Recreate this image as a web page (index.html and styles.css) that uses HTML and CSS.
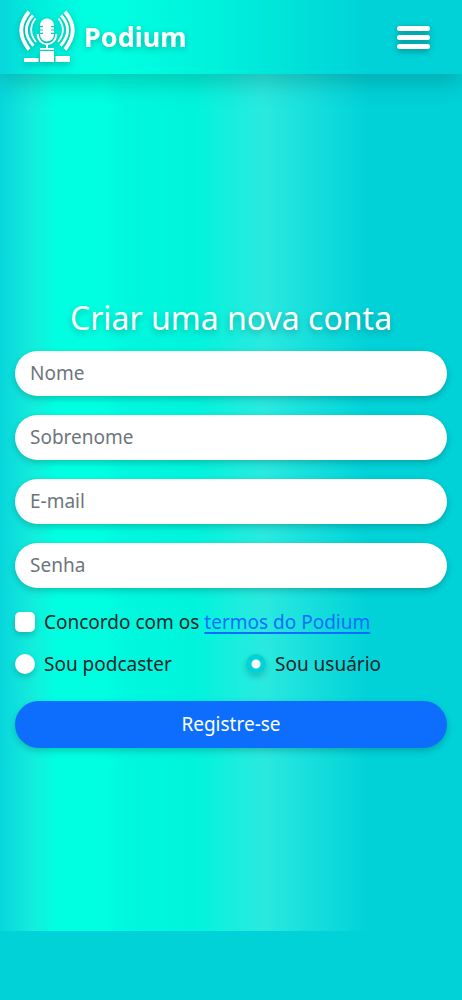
FILE: index.html
```html
<!DOCTYPE html>
<html lang="pt-BR">
<head>
<meta charset="utf-8">
<meta name="viewport" content="width=device-width, initial-scale=1">
<title>Podium</title>
<link rel="stylesheet" href="styles.css">
</head>
<body>
<div class="page">
  <header class="navbar">
    <a class="brand" href="#">
      <svg class="brand-logo" viewBox="0 0 56 54" aria-hidden="true">
        <g fill="none" stroke="#fff">
          <path stroke-width="3.8" d="M10 1.800Q-5.500 20 10 39.500M46 1.800Q61.500 20 46 39.500"/>
          <path stroke-width="2.800" d="M14 5.200Q0.500 20 14.500 35.800M42 5.200Q55.500 20 41.500 35.800"/>
          <path stroke-width="1.800" d="M16.500 8.500Q7.500 20 17 32M39.500 8.500Q48.500 20 39 32"/>
          <path stroke-width="2" d="M18.700 24C19 37.500 37 37.500 37.300 24M28 34v4"/>
        </g>
        <path fill="#fff" d="M21 15.500a7 7 0 0 1 14 0V16h-3v1.200h3v2.200h-3v1.200h3v2.200h-3V24h3v.5a7 7 0 0 1-14 0V24h3v-1.200h-3v-2.200h3v-1.200h-3v-2.200h3V16h-3zM21 38h14v1.800H21zM21 41h14v11H21zM5 48h14.500v4H5zM36.500 46H51v6H36.500z"/>
      </svg>
      <span>Podium</span>
    </a>
    <button class="menu" type="button" aria-label="Abrir menu">
      <span></span><span></span><span></span>
    </button>
  </header>
  <main class="content">
    <h1>Criar uma nova conta</h1>
    <form class="signup">
      <input class="field" type="text" placeholder="Nome" aria-label="Nome">
      <input class="field" type="text" placeholder="Sobrenome" aria-label="Sobrenome">
      <input class="field" type="email" placeholder="E-mail" aria-label="E-mail">
      <input class="field" type="password" placeholder="Senha" aria-label="Senha">
      <div class="option terms">
        <input class="check" type="checkbox" id="terms">
        <label for="terms">Concordo com os <a href="#">termos do Podium</a></label>
      </div>
      <div class="roles">
        <div class="option">
          <input class="check radio" type="radio" name="role" id="podcaster">
          <label for="podcaster">Sou podcaster</label>
        </div>
        <div class="option">
          <input class="check radio" type="radio" name="role" id="user" checked>
          <label for="user">Sou usuário</label>
        </div>
      </div>
      <button class="submit" type="submit">Registre-se</button>
    </form>
  </main>
</div>
</body>
</html>
```
FILE: styles.css
```css
* { box-sizing: border-box; }

html { background: #00d2d8; }

body {
  margin: 0;
  font-family: "Noto Sans", sans-serif;
  font-size: 19px;
  line-height: 30px;
  color: #212529;
}

.page {
  display: flex;
  flex-direction: column;
  min-height: calc(100vh - 69px);
  background: linear-gradient(90deg, #08d6dc 0%, #14ecdc 7%, #00ffe1 12%, #00ffe1 22%, #00f8df 27%, #00f4dc 42%, #2ae9df 57%, #00d2d8 80%);
}

.navbar {
  display: flex;
  align-items: center;
  justify-content: space-between;
  height: 74px;
  padding: 0 32px 0 19px;
  background: linear-gradient(90deg, #08d6dc 0%, #00ecdc 7%, #00ffe1 19%, #00ffe1 25%, #00f0dc 48%, #00d2d8 80%);
  box-shadow: 0 8px 24px rgba(0, 0, 0, .2);
}

.brand {
  display: flex;
  align-items: center;
  gap: 9px;
  color: #fff;
  font-size: 27px;
  font-weight: 700;
  text-decoration: none;
  filter: drop-shadow(0 2px 3px rgba(0, 0, 0, .25));
}

.brand-logo { width: 56px; height: 54px; }

.menu {
  display: flex;
  flex-direction: column;
  gap: 4px;
  width: 33px;
  padding: 0;
  border: 0;
  background: none;
  filter: drop-shadow(0 2px 3px rgba(0, 0, 0, .35));
}

.menu span { height: 5px; border-radius: 3px; background: #fff; }

.content {
  display: flex;
  flex: 1;
  flex-direction: column;
  justify-content: center;
  padding: 37px 15px 0;
}

h1 {
  margin: 0 0 10px;
  font-size: 32px;
  font-weight: 400;
  line-height: 46px;
  text-align: center;
  color: #fff;
  text-shadow: 0 3px 6px rgba(0, 0, 0, .25);
}

.signup { display: flex; flex-direction: column; gap: 19px; }

.field {
  width: 100%;
  height: 45px;
  padding: 0 15px;
  border: 0;
  border-radius: 23px;
  background: #fff;
  font: inherit;
  color: #212529;
  box-shadow: 0 3px 7px rgba(0, 0, 0, .2);
}

.field::placeholder { color: #6c757d; opacity: 1; }

.option { display: flex; align-items: center; gap: 9px; }

.terms { margin-bottom: -7px; }

.option a {
  color: #0d6efd;
  text-decoration: underline 2px #0d6efd;
  text-underline-offset: 3px;
}

.check {
  appearance: none;
  flex: none;
  width: 20px;
  height: 20px;
  margin: 0;
  border-radius: 5px;
  background: #fff;
  box-shadow: 0 3px 6px rgba(0, 0, 0, .2);
}

.radio { border-radius: 50%; }

.radio:checked { background: radial-gradient(circle, #fff 4px, #00d2d8 5px); }

.roles {
  display: grid;
  grid-template-columns: 1fr 1fr;
  gap: 30px;
  margin-bottom: 3px;
}

.submit {
  height: 47px;
  padding: 0 16px;
  border: 0;
  border-radius: 24px;
  background: #0d6efd;
  color: #fff;
  font: inherit;
  box-shadow: 0 3px 7px rgba(0, 0, 0, .2);
}
```
